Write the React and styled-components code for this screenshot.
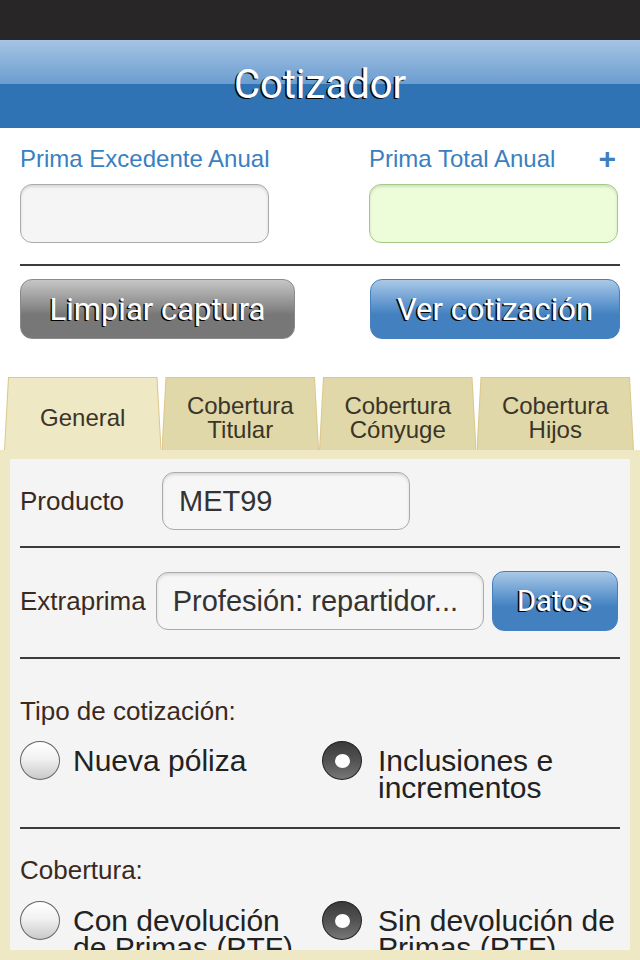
import styled, { createGlobalStyle } from "styled-components";

const GlobalStyle = createGlobalStyle`
    html, body {
        margin: 0;
        padding: 0;
        background: #ffffff;
    }
    * {
        box-sizing: border-box;
    }
`;

const Screen = styled.div`
    width: 640px;
    height: 960px;
    display: flex;
    flex-direction: column;
    overflow: hidden;
    font-family: "Liberation Sans", Arial, sans-serif;
    background: #ffffff;
`;

const StatusBar = styled.div`
    height: 40px;
    flex: none;
    background: #282627;
`;

const Header = styled.header`
    height: 88px;
    flex: none;
    display: flex;
    align-items: center;
    justify-content: center;
    background: linear-gradient(
        to bottom,
        #a6c4e3 0%,
        #6b9dd0 50%,
        #2f73b5 50%,
        #2f73b5 100%
    );
`;

const Title = styled.h1`
    margin: 0;
    font-family: Roboto, "Liberation Sans", sans-serif;
    font-size: 40px;
    font-weight: 400;
    color: #ffffff;
    text-shadow: -1.5px 1px 0 #000000;
`;

const TopSection = styled.section`
    padding: 17px 20px 0 20px;
    flex: none;
`;

const FieldGrid = styled.div`
    display: grid;
    grid-template-columns: 1fr 1fr;
    column-gap: 98px;
    row-gap: 11px;
`;

const TopLabel = styled.div`
    display: flex;
    justify-content: space-between;
    align-items: center;
    font-size: 24px;
    line-height: 28px;
    color: #3a7fc0;
`;

const Plus = styled.span`
    font-weight: 700;
    font-size: 30px;
    line-height: 28px;
    color: #3f80c1;
    margin-right: 4px;
`;

const AmountBox = styled.div`
    width: 249px;
    height: 59px;
    border-radius: 12px;
    border: 1px solid ${(p) => (p.$total ? "#a3c986" : "#aaaaaa")};
    background: ${(p) => (p.$total ? "#eefdd9" : "#f5f5f5")};
    box-shadow: inset 0 2px 3px rgba(0, 0, 0, 0.12);
`;

const Divider = styled.hr`
    margin: ${(p) => p.$margin || "0"};
    border: none;
    height: 2px;
    background: #3c3c3c;
`;

const ButtonRow = styled.div`
    display: flex;
    justify-content: space-between;
`;

const GlossButton = styled.button`
    width: ${(p) => p.$width}px;
    height: ${(p) => p.$height || 60}px;
    margin-left: ${(p) => p.$offset || 0}px;
    border-radius: 12px;
    border: 1px solid ${(p) => (p.$tone === "gray" ? "#8a8a8a" : "#4580bd")};
    padding: 0;
    font-family: Roboto, "Liberation Sans", sans-serif;
    font-size: ${(p) => p.$size || 31}px;
    color: #ffffff;
    text-shadow: -1.5px 1px 0 #000000;
    background: ${(p) =>
        p.$tone === "gray"
            ? "linear-gradient(to bottom, #c6c6c6 0%, #8c8c8c 45%, #777777 60%, #777777 100%)"
            : "linear-gradient(to bottom, #aac9e7 0%, #5a92cc 45%, #4380c0 60%, #4380c0 100%)"};
`;

const Tabs = styled.nav`
    display: flex;
    height: 73px;
    margin-top: 38px;
    padding: 0 6px 0 4px;
    flex: none;
`;

const Tab = styled.div`
    position: relative;
    flex: 1;
    display: flex;
    align-items: center;
    justify-content: center;
    padding-top: 8px;
    text-align: center;
    font-size: 24px;
    line-height: 24px;
    color: #3a3528;

    &::before,
    &::after {
        content: "";
        position: absolute;
        clip-path: polygon(4px 0, calc(100% - 4px) 0, 100% 100%, 0 100%);
    }

    &::before {
        inset: 0;
        background: #dcc78c;
        border-radius: 4px 4px 0 0;
    }

    &::after {
        inset: 1px 1px 0 1px;
        background: ${(p) => (p.$active ? "#efe8c4" : "#e0d8a8")};
    }
`;

const TabText = styled.span`
    position: relative;
    z-index: 1;
`;

const PanelFrame = styled.div`
    flex: 1;
    min-height: 0;
    display: flex;
    padding: 9px 10px 10px 10px;
    background: #efe8c4;
`;

const Panel = styled.div`
    flex: 1;
    overflow: hidden;
    background: #f4f4f4;
    padding: 13px 10px 0 10px;
`;

const FieldRow = styled.div`
    display: flex;
    align-items: center;
`;

const FieldLabel = styled.span`
    min-width: ${(p) => p.$labelWidth || 0}px;
    margin-right: ${(p) => p.$gap || 0}px;
    font-size: 26px;
    color: #3a2a1e;
`;

const TextBox = styled.div`
    width: ${(p) => p.$width}px;
    height: 58px;
    display: flex;
    align-items: center;
    padding-left: 16px;
    border-radius: 12px;
    border: 1px solid #aaaaaa;
    background: #f6f6f6;
    box-shadow: inset 0 2px 3px rgba(0, 0, 0, 0.12);
    font-size: 29px;
    color: #333333;
    white-space: nowrap;
`;

const GroupTitle = styled.div`
    font-size: 26px;
    line-height: 30px;
    color: #3a2a1e;
`;

const RadioGrid = styled.div`
    display: grid;
    grid-template-columns: 302px 1fr;
    margin-top: ${(p) => p.$top}px;
`;

const RadioOption = styled.label`
    display: flex;
    align-items: flex-start;
    gap: ${(p) => p.$gap}px;
`;

const RadioDot = styled.span`
    flex: none;
    width: 40px;
    height: 39px;
    border-radius: 50%;
    display: flex;
    align-items: center;
    justify-content: center;
    border: 1px solid ${(p) => (p.$checked ? "#222222" : "#666666")};
    background: ${(p) =>
        p.$checked
            ? "linear-gradient(to bottom, #3a3a3a 0%, #555555 55%, #777777 100%)"
            : "linear-gradient(to bottom, #ffffff 0%, #f1f1f1 45%, #c9c9c9 100%)"};

    &::after {
        content: "";
        display: ${(p) => (p.$checked ? "block" : "none")};
        width: 15px;
        height: 14px;
        border-radius: 50%;
        background: #ffffff;
    }
`;

const RadioText = styled.span`
    margin-top: 6px;
    font-size: 30px;
    line-height: 27px;
    color: #222222;
`;

function Radio({ checked, gap, children }) {
    return (
        <RadioOption $gap={gap}>
            <RadioDot $checked={checked} />
            <RadioText>{children}</RadioText>
        </RadioOption>
    );
}

export default function App() {
    return (
        <>
            <GlobalStyle />
            <Screen>
                <StatusBar />
                <Header>
                    <Title>Cotizador</Title>
                </Header>

                <TopSection>
                    <FieldGrid>
                        <TopLabel>Prima Excedente Anual</TopLabel>
                        <TopLabel>
                            Prima Total Anual
                            <Plus>+</Plus>
                        </TopLabel>
                        <AmountBox />
                        <AmountBox $total />
                    </FieldGrid>
                    <Divider $margin="21px 0 13px 0" />
                    <ButtonRow>
                        <GlossButton $tone="gray" $width={275}>
                            Limpiar captura
                        </GlossButton>
                        <GlossButton $width={250}>Ver cotización</GlossButton>
                    </ButtonRow>
                </TopSection>

                <Tabs>
                    <Tab $active>
                        <TabText>General</TabText>
                    </Tab>
                    <Tab>
                        <TabText>
                            Cobertura
                            <br />
                            Titular
                        </TabText>
                    </Tab>
                    <Tab>
                        <TabText>
                            Cobertura
                            <br />
                            Cónyuge
                        </TabText>
                    </Tab>
                    <Tab>
                        <TabText>
                            Cobertura
                            <br />
                            Hijos
                        </TabText>
                    </Tab>
                </Tabs>

                <PanelFrame>
                    <Panel>
                        <FieldRow>
                            <FieldLabel $labelWidth={142}>Producto</FieldLabel>
                            <TextBox $width={248}>MET99</TextBox>
                        </FieldRow>
                        <Divider $margin="16px 0 23px 0" />
                        <FieldRow>
                            <FieldLabel $gap={10}>Extraprima</FieldLabel>
                            <TextBox $width={328}>Profesión: repartidor...</TextBox>
                            <GlossButton
                                $width={126}
                                $height={60}
                                $size={29}
                                $offset={8}
                            >
                                Datos
                            </GlossButton>
                        </FieldRow>
                        <Divider $margin="26px 0 37px 0" />
                        <GroupTitle>Tipo de cotización:</GroupTitle>
                        <RadioGrid $top={15}>
                            <Radio gap={13}>Nueva póliza</Radio>
                            <Radio checked gap={16}>
                                Inclusiones e
                                <br />
                                incrementos
                            </Radio>
                        </RadioGrid>
                        <Divider $margin="26px 0 26px 0" />
                        <GroupTitle>Cobertura:</GroupTitle>
                        <RadioGrid $top={16}>
                            <Radio gap={13}>
                                Con devolución
                                <br />
                                de Primas (PTF)
                            </Radio>
                            <Radio checked gap={16}>
                                Sin devolución de
                                <br />
                                Primas (PTF)
                            </Radio>
                        </RadioGrid>
                    </Panel>
                </PanelFrame>
            </Screen>
        </>
    );
}
